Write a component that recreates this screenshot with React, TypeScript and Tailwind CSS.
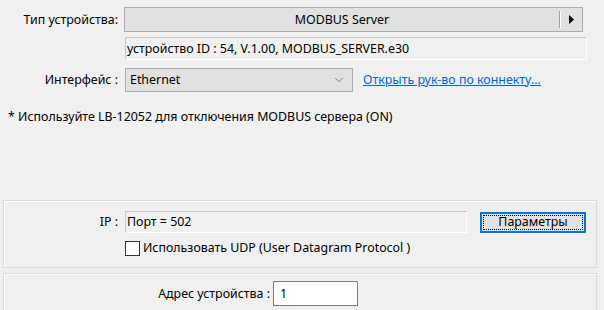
import { ChevronDown } from 'lucide-react';

const font = { fontFamily: '"Noto Sans", "Liberation Sans", sans-serif' };

export default function App() {
  return (
    <div
      style={font}
      className="h-[310px] w-[604px] overflow-hidden bg-[#f0f0f0] text-[12.4px] leading-[16px] text-black"
    >
      {/* device type */}
      <div className="flex items-center pt-[7px]">
        <div className="w-[118px] text-right">Тип устройства:</div>
        <div className="ml-[6px] flex h-[25px] w-[459px] items-center border border-[#adadad] bg-[#e1e1e1]">
          <div className="flex-1 text-center">MODBUS Server</div>
          <div className="h-[17px] w-[2px] border-l border-[#a0a0a0] bg-white" />
          <div className="flex w-[21px] justify-center">
            <svg width="5" height="9" viewBox="0 0 5 9">
              <path d="M0 0 L5 4.5 L0 9 Z" fill="#000" />
            </svg>
          </div>
        </div>
      </div>

      <div className="ml-[125px] mt-[5px] flex h-[23px] w-[462px] items-center border border-[#c8c8c8] border-b-white border-r-white pl-[1px]">
        устройство ID : 54, V.1.00, MODBUS_SERVER.e30
      </div>

      {/* interface */}
      <div className="mt-[8px] flex items-center">
        <div className="w-[118px] text-right">Интерфейс :</div>
        <div className="ml-[7px] flex h-[24px] w-[228px] items-center border border-[#adadad] bg-[#e1e1e1] pl-[4px] pr-[6px]">
          <span className="flex-1">Ethernet</span>
          <ChevronDown size={14} strokeWidth={1.2} className="text-[#606060]" />
        </div>
        <a className="ml-[10px] text-[#0066cc] underline">Открыть рук-во по коннекту...</a>
      </div>

      <div className="mt-[17px] pl-[8px]">* Используйте LB-12052 для отключения MODBUS сервера (ON)</div>

      {/* IP group */}
      <div className="ml-[3px] mt-[75px] h-[68px] w-[594px] border border-[#dcdcdc] shadow-[inset_1px_1px_0_#fff]">
        <div className="mt-[10px] flex items-center">
          <div className="w-[114px] text-right">IP :</div>
          <div className="ml-[7px] flex h-[22px] w-[342px] items-center border border-[#c8c8c8] border-b-white border-r-white pl-[1px]">
            Порт = 502
          </div>
          <button className="ml-[13px] flex h-[21px] w-[106px] items-center justify-center border-2 border-[#0078d7] bg-[#e1e1e1] p-[1px]">
            <span className="flex h-full w-full items-center justify-center border border-dotted border-black">
              Параметры
            </span>
          </button>
        </div>
        <div className="ml-[121px] mt-[7px] flex items-center">
          <div className="h-[15px] w-[15px] border border-[#333] bg-white" />
          <span className="ml-[3px]">Использовать UDP (User Datagram Protocol )</span>
        </div>
      </div>

      {/* address group */}
      <div className="ml-[3px] mt-[5px] h-[60px] w-[594px] border border-[#dcdcdc] shadow-[inset_1px_1px_0_#fff]">
        <div className="mt-[7px] flex items-center">
          <div className="w-[266px] text-right">Адрес устройства :</div>
          <div className="ml-[3px] flex h-[25px] w-[85px] items-center border border-[#7a7a7a] bg-white pl-[6px]">
            1
          </div>
        </div>
      </div>
    </div>
  );
}
